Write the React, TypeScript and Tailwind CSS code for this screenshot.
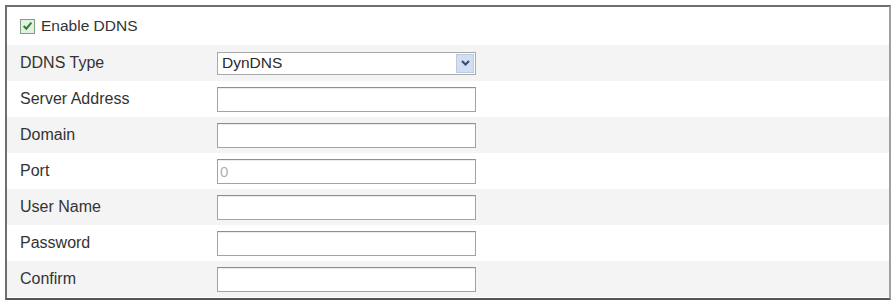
import React from "react";

const rows: { label: string; kind: "select" | "input" | "disabled" }[] = [
  { label: "DDNS Type", kind: "select" },
  { label: "Server Address", kind: "input" },
  { label: "Domain", kind: "input" },
  { label: "Port", kind: "disabled" },
  { label: "User Name", kind: "input" },
  { label: "Password", kind: "input" },
  { label: "Confirm", kind: "input" },
];

function Field({ kind }: { kind: "select" | "input" | "disabled" }) {
  if (kind === "select") {
    return (
      <div className="flex h-[23px] w-[259px] items-center border border-[#a9a9a9] bg-white">
        <span className="flex-1 pl-[4px] text-[15.5px] leading-none text-[#2a2a2a]">DynDNS</span>
        <div className="mr-[1px] flex h-[19px] w-[18px] items-center justify-center border border-[#bccbe4] bg-[#d2def2]">
          <svg width="9" height="6" viewBox="0 0 9 6">
            <path d="M1 1 L4.5 4.5 L8 1" fill="none" stroke="#3b4a6b" strokeWidth="2" />
          </svg>
        </div>
      </div>
    );
  }
  return (
    <div className="flex h-[25px] w-[259px] items-center border border-[#a3a3a3] border-t-[#8e8e8e] bg-white shadow-[inset_0_1px_1px_rgba(0,0,0,0.08)]">
      {kind === "disabled" && <span className="pl-[2px] text-[15px] leading-none text-[#b0b0b0]">0</span>}
    </div>
  );
}

export default function App() {
  return (
    <div
      className="h-[303px] w-[895px] bg-white pl-[5px] pt-[5px]"
      style={{ fontFamily: '"Liberation Sans", Arial, sans-serif' }}
    >
      <div className="flex h-[295px] w-[886px] flex-col border-2 border-[#6e6e6e] border-r-[#a0a0a0] border-b-[#555]">
        <div className="flex h-[38px] items-center bg-white pl-[13px]">
          <div className="flex h-[15px] w-[15px] items-center justify-center border border-[#7f9f7f] bg-[#e3f1e3]">
            <svg width="11" height="10" viewBox="0 0 10 9">
              <path d="M1.5 4.5 L4 7 L8.5 1.5" fill="none" stroke="#2e7d32" strokeWidth="1.8" />
            </svg>
          </div>
          <span className="ml-[6px] text-[15.5px] leading-none text-[#333]">Enable DDNS</span>
        </div>
        {rows.map((r, i) => (
          <div
            key={r.label}
            className={`flex h-[36px] items-center ${i % 2 === 0 ? "bg-[#f4f4f4]" : "bg-white"}`}
          >
            <div className="w-[210px] pl-[13px] text-[16px] leading-none text-[#333]">{r.label}</div>
            <Field kind={r.kind} />
          </div>
        ))}
      </div>
    </div>
  );
}
